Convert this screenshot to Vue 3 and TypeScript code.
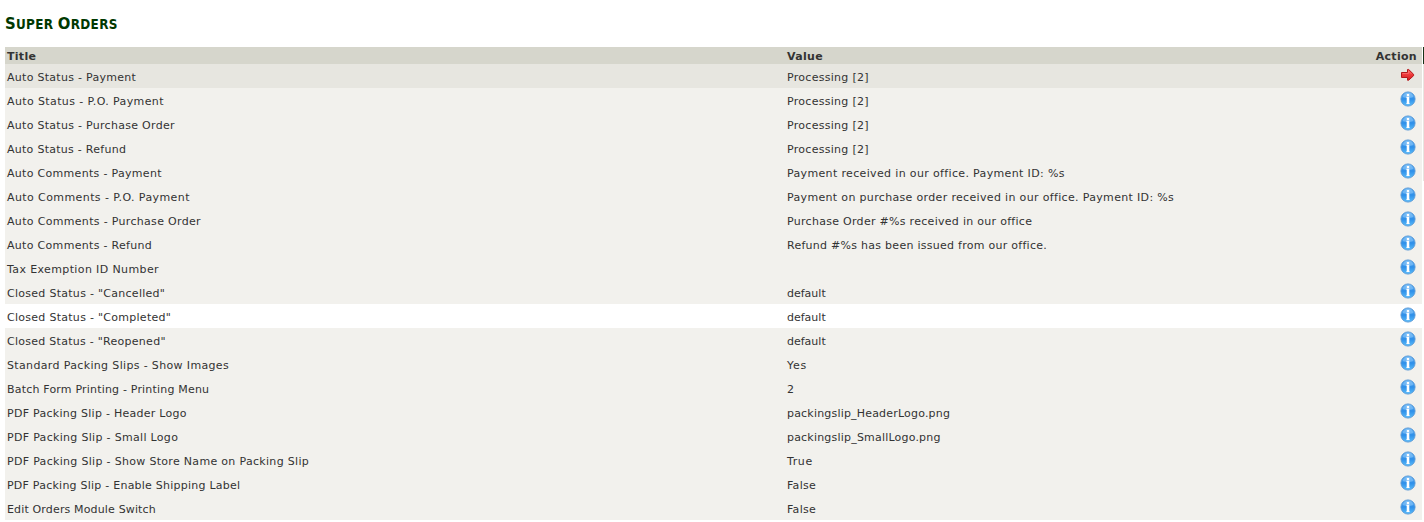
<script setup lang="ts">
interface Setting {
  title: string
  value: string
  tracking: [number, number]
  state?: 'selected' | 'hovered'
}

// tracking: letter spacing in pixels for the title and the value
const settings: Setting[] = [
  { title: 'Auto Status - Payment', value: 'Processing [2]', tracking: [0.286, 0.286], state: 'selected' },
  { title: 'Auto Status - P.O. Payment', value: 'Processing [2]', tracking: [0.385, 0.286] },
  { title: 'Auto Status - Purchase Order', value: 'Processing [2]', tracking: [0.286, 0.286] },
  { title: 'Auto Status - Refund', value: 'Processing [2]', tracking: [0.27, 0.286] },
  { title: 'Auto Comments - Payment', value: 'Payment received in our office. Payment ID: %s', tracking: [0.304, 0.35] },
  { title: 'Auto Comments - P.O. Payment', value: 'Payment on purchase order received in our office. Payment ID: %s', tracking: [0.41, 0.335] },
  { title: 'Auto Comments - Purchase Order', value: 'Purchase Order #%s received in our office', tracking: [0.32, 0.29] },
  { title: 'Auto Comments - Refund', value: 'Refund #%s has been issued from our office.', tracking: [0.31, 0.27] },
  { title: 'Tax Exemption ID Number', value: '', tracking: [0.38, 0] },
  { title: 'Closed Status - "Cancelled"', value: 'default', tracking: [0.28, 0] },
  { title: 'Closed Status - "Completed"', value: 'default', tracking: [0.28, 0], state: 'hovered' },
  { title: 'Closed Status - "Reopened"', value: 'default', tracking: [0.27, 0] },
  { title: 'Standard Packing Slips - Show Images', value: 'Yes', tracking: [0.35, 0.7] },
  { title: 'Batch Form Printing - Printing Menu', value: '2', tracking: [0.19, 0] },
  { title: 'PDF Packing Slip - Header Logo', value: 'packingslip_HeaderLogo.png', tracking: [0.27, 0.19] },
  { title: 'PDF Packing Slip - Small Logo', value: 'packingslip_SmallLogo.png', tracking: [0.31, 0.2] },
  { title: 'PDF Packing Slip - Show Store Name on Packing Slip', value: 'True', tracking: [0.31, 0.6] },
  { title: 'PDF Packing Slip - Enable Shipping Label', value: 'False', tracking: [0.235, 0.3] },
  { title: 'Edit Orders Module Switch', value: 'False', tracking: [0.15, 0.3] },
]
</script>

<template>
  <main class="page">
    <h1 class="heading"><span class="cap">S</span>uper <span class="cap">O</span>rders</h1>
    <div class="panel">
      <div class="table">
        <div class="row head">
          <span>Title</span><span>Value</span><span class="action">Action</span>
        </div>
        <div v-for="s in settings" :key="s.title" class="row" :class="s.state">
          <span :style="{ letterSpacing: s.tracking[0] + 'px' }">{{ s.title }}</span>
          <span :style="{ letterSpacing: s.tracking[1] + 'px' }">{{ s.value }}</span>
          <span class="action">
            <svg v-if="s.state === 'selected'" class="icon" width="16" height="16" viewBox="0 0 16 16">
              <path d="M1.5 5.5H7.5V2.5H8.7L13.6 7.3V8.7L8.7 13.2H7.5V10.5H1.5Z" fill="url(#arrow-fill)" stroke="#b2191c" />
              <path d="M2.5 6.5H8.5V4L11.5 7" fill="none" stroke="#ff7c7a" stroke-width=".6" />
            </svg>
            <svg v-else class="icon" width="16" height="16" viewBox="0 0 16 16">
              <circle cx="8" cy="8" r="7.1" fill="url(#info-fill)" stroke="#5b9ad6" stroke-width=".9" />
              <path d="M2.5 6Q4 2 8 1.8T13.5 6Q8 8 2.5 6Z" fill="#a6d5fb" opacity=".45" />
              <path d="M6.5 2.8H9.5V13.2H6.5Z" fill="#a9d3f8" />
              <path d="M7 3H9V5H7ZM6.4 6H9V12.2H9.6V13H6.4V12.2H7V6.8H6.4Z" fill="#fff" />
            </svg>
          </span>
        </div>
      </div>
      <div class="edge"></div>
    </div>
    <svg class="defs" width="0" height="0">
      <defs>
        <linearGradient id="info-fill" x1="0" y1="0" x2="0" y2="1">
          <stop offset="0" stop-color="#5eb0f5" />
          <stop offset=".5" stop-color="#2e8fe9" />
          <stop offset="1" stop-color="#59bdfb" />
        </linearGradient>
        <linearGradient id="arrow-fill" x1="0" y1="0" x2="0" y2="1">
          <stop offset="0" stop-color="#ff5554" />
          <stop offset="1" stop-color="#d91d20" />
        </linearGradient>
      </defs>
    </svg>
  </main>
</template>

<style>
body {
  background: #fff;
}
</style>

<style scoped>
.page {
  height: 522px;
  overflow: hidden;
  font: 11px/14px "DejaVu Sans", Verdana, sans-serif;
  color: #333;
}
.heading {
  margin: 0;
  height: 47px;
  box-sizing: border-box;
  padding: 14px 0 0 5px;
  font: bold 13.4px/20px "DejaVu Sans Condensed", "DejaVu Sans", sans-serif;
  letter-spacing: 0.3px;
  text-transform: uppercase;
  color: #003800;
}
.cap {
  font-size: 16.5px;
}
.panel {
  display: flex;
  padding-left: 5px;
}
.table {
  width: 1417px;
}
.row {
  display: grid;
  grid-template-columns: 780px 1fr 80px;
  align-items: center;
  height: 24px;
  box-sizing: border-box;
  padding: 4px 5px 0 2px;
  background: #f2f1ed;
  white-space: pre;
}
.head {
  height: 17px;
  padding-top: 2px;
  background: #d6d6cc;
  font-weight: bold;
  letter-spacing: 0.3px;
}
.selected {
  background: #e7e6e0;
}
.hovered {
  background: #fff;
}
.action {
  display: flex;
  justify-content: flex-end;
}
.icon {
  display: block;
  margin: -6px 1px 0 0;
}
.edge {
  width: 1px;
  height: 134px;
  margin-left: 1px;
  background: linear-gradient(#173318 17px, #e7e6e0 17px);
}
.defs {
  display: block;
}
</style>
